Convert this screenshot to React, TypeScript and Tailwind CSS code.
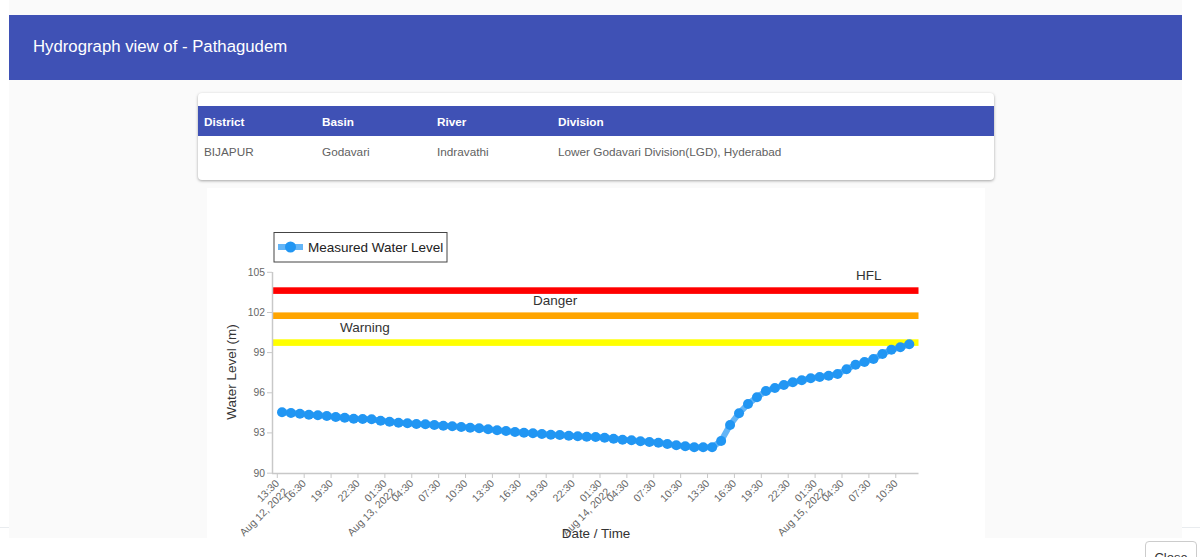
const F = '"Liberation Sans", Arial, sans-serif';

const ys = [
  412.3, 413, 413.7, 414.7, 415.3, 416, 417, 417.7, 418.7, 419, 419.3, 420.7, 421.7, 422.7, 423.3, 424, 424.3, 425,
  425.7, 426.3, 427, 427.7, 428.3, 429.3, 430.3,
  431, 432, 432.7, 433.3, 434, 434.7, 435, 435.7, 436.3, 436.7, 437, 437.7, 438.7, 439.7, 440.3, 441.3, 442, 442.7,
  444, 445.3, 446.3, 447.3, 447.3, 447.3,
  441, 425, 413.3, 404, 397.3, 391, 388, 385, 382.3, 380.3, 378.3, 377, 375.7, 374, 369.3, 364.7, 362, 359, 354, 349.7, 347.3, 344.3,
];
const pts = ys.map((y, i) => ({ x: 282 + i * (627.3 / 70), y }));

const times = ['13:30', '16:30', '19:30', '22:30', '01:30', '04:30', '07:30', '10:30'];
const dates: Record<number, string> = { 0: 'Aug 12, 2022', 4: 'Aug 13, 2022', 12: 'Aug 14, 2022', 20: 'Aug 15, 2022' };
const ticks = Array.from({ length: 24 }, (_, i) => ({
  x: 277.3 + i * 26.89,
  t: times[i % 8],
  d: dates[i],
}));
const yTicks = [
  [105, 272.3],
  [102, 312.5],
  [99, 352.6],
  [96, 392.8],
  [93, 432.9],
  [90, 473.2],
] as const;

function Chart() {
  return (
    <svg viewBox="207 188 778 350" className="block h-[350px] w-[778px] overflow-visible" style={{ fontFamily: F }}>
      <rect x="274" y="232.5" width="173" height="29.5" fill="#fff" stroke="#444" strokeWidth="1" />
      <line x1="278" x2="303" y1="247" y2="247" stroke="#2196f3" strokeOpacity="0.7" strokeWidth="6" />
      <circle cx="290.5" cy="247" r="5.5" fill="#2196f3" />
      <text x="308" y="252" fontSize="13.5" fill="#222">Measured Water Level</text>

      <rect x="273" y="287.3" width="645.5" height="6.6" fill="#ff0000" />
      <rect x="273" y="312.4" width="645.5" height="6.6" fill="#ffa500" />
      <rect x="273" y="339.3" width="645.5" height="6.6" fill="#ffff00" />
      <text x="856" y="280" fontSize="13.5" fill="#333">HFL</text>
      <text x="533" y="305" fontSize="13.5" fill="#333">Danger</text>
      <text x="340" y="332" fontSize="13.5" fill="#333">Warning</text>

      <line x1="272.5" x2="272.5" y1="272" y2="473.5" stroke="#c8c8c8" strokeWidth="1.5" />
      <line x1="272" x2="918.5" y1="473.5" y2="473.5" stroke="#c8c8c8" strokeWidth="1.5" />
      {yTicks.map(([v, y]) => (
        <g key={v}>
          <line x1="267" x2="272" y1={y} y2={y} stroke="#c8c8c8" />
          <text x="265" y={y + 3.5} fontSize="10.3" textAnchor="end" fill="#666">{v}</text>
        </g>
      ))}
      {ticks.map((k) => (
        <g key={k.x}>
          <line x1={k.x} x2={k.x} y1="474" y2="478" stroke="#c8c8c8" />
          <g transform={`translate(${k.x + 2.5} 484) rotate(-45)`}>
            <text textAnchor="end" fontSize="10.5" fill="#666">{k.t}</text>
            {k.d && (
              <text y="12" textAnchor="end" fontSize="10.5" fill="#666">{k.d}</text>
            )}
          </g>
        </g>
      ))}
      <polyline
        points={pts.map((p) => `${p.x},${p.y}`).join(' ')}
        fill="none"
        stroke="#2196f3"
        strokeOpacity="0.7"
        strokeWidth="6"
      />
      {pts.map((p) => (
        <circle key={p.x} cx={p.x} cy={p.y} r="5" fill="#2196f3" />
      ))}
      <text transform="translate(236 372) rotate(-90)" textAnchor="middle" fontSize="13.5" fill="#333">Water Level (m)</text>
      <text x="596" y="538" textAnchor="middle" fontSize="13.4" fill="#333">Date / Time</text>
    </svg>
  );
}

export default function App() {
  return (
    <div className="h-[557px] w-[1200px] overflow-hidden bg-white" style={{ fontFamily: F }}>
      <div className="relative z-10 mx-[9px] h-[538px] w-[1173px] bg-[#fafafa] pt-[15px]">
        <header className="flex h-[65px] items-center bg-[#3f51b5] pb-[1px] pl-[24px] text-[16.75px] text-white">
          Hydrograph view of - Pathagudem
        </header>
        <div className="ml-[189px] mt-[13px] h-[87px] w-[796px] rounded-[4px] bg-white pt-[13px] shadow-[0_1px_3px_rgba(0,0,0,0.35)]">
          <table className="w-full table-fixed border-collapse text-left text-[11.75px]">
            <thead>
              <tr className="h-[30px] bg-[#3f51b5] text-white">
                <th className="w-[118px] pl-[6px] pt-[1px] font-bold">District</th>
                <th className="w-[115px] pl-[6px] pt-[1px] font-bold">Basin</th>
                <th className="w-[121px] pl-[6px] pt-[1px] font-bold">River</th>
                <th className="pl-[6px] pt-[1px] font-bold">Division</th>
              </tr>
            </thead>
            <tbody>
              <tr className="h-[31px] text-[#616161]">
                <td className="pl-[6px]">BIJAPUR</td>
                <td className="pl-[6px]">Godavari</td>
                <td className="pl-[6px]">Indravathi</td>
                <td className="pl-[6px]">Lower Godavari Division(LGD), Hyderabad</td>
              </tr>
            </tbody>
          </table>
        </div>
        <div className="ml-[198px] mt-[8px] h-[350px] w-[778px] bg-white">
          <Chart />
        </div>
      </div>
      <footer className="-mt-[11px] flex justify-end border-t border-[#e9ecef] pr-[3px] pt-[13px]">
        <button className="h-[34px] w-[52px] rounded-[4px] border border-[#ccc] bg-white pb-[1px] text-[13px] text-[#333]">
          Close
        </button>
      </footer>
    </div>
  );
}
